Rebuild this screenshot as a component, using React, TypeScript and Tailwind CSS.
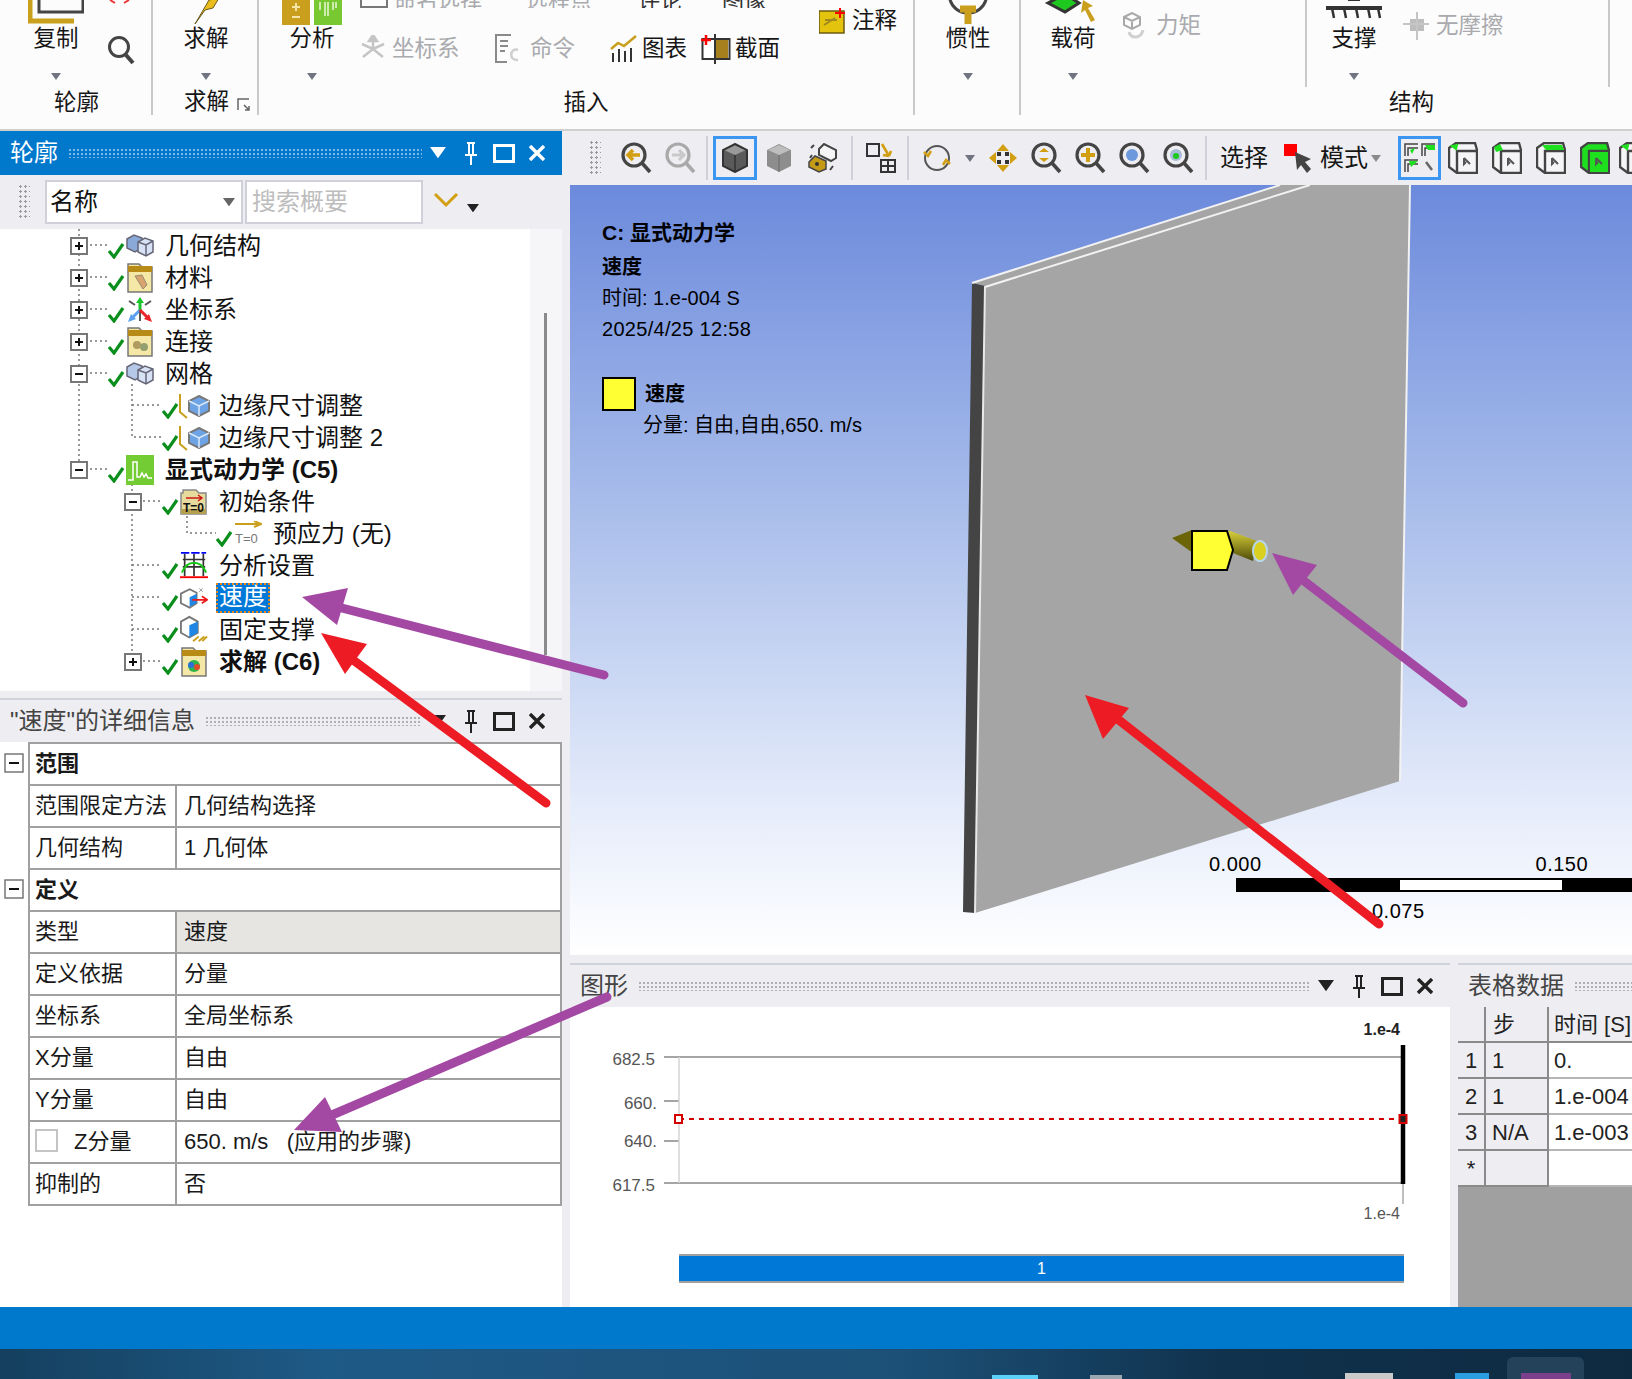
import type { ReactNode } from "react"

const Caret = ({ color = "#6f7480", size = 10 }: { color?: string; size?: number }) => (
  <svg width={size} height={size * 0.7} viewBox="0 0 10 7" className="shrink-0">
    <path d="M0 0H10L5 7Z" fill={color} />
  </svg>
)

const Sep = () => <div className="w-[2px] h-[44px] bg-[#d0d1d8] shrink-0" />

const Grip = ({ className }: { className: string }) => (
  <div className={`bg-[radial-gradient(circle,#9a9a9a_1px,transparent_1.2px)] bg-[length:5px_5px] ${className}`} />
)

const WinButtons = ({ color }: { color: string }) => (
  <div className="flex items-center shrink-0 pr-[7px]">
    <Caret color={color} size={16} />
    <svg width="14" height="24" viewBox="0 0 14 24" className="ml-[18px]" fill="none" stroke={color} strokeWidth="2">
      <path d="M3 2H11M5 2V14M9 2V14M1 14H13M7 14V24" />
    </svg>
    <svg width="22" height="20" viewBox="0 0 22 20" className="ml-[15px]" fill="none" stroke={color}>
      <rect x="1.5" y="2.5" width="19" height="16" strokeWidth="3" />
    </svg>
    <svg width="16" height="16" viewBox="0 0 16 16" className="ml-[14px]" stroke={color} strokeWidth="3.4">
      <path d="M1 1L15 15M15 1L1 15" />
    </svg>
  </div>
)

const PanelHeader = ({ title, active, grip }: { title: string; active?: boolean; grip?: boolean }) => (
  <div
    className={`flex items-center h-[44px] shrink-0 pl-[10px] pr-[10px] text-[24px] leading-none ${
      active ? "bg-[#0078cc] text-white" : "bg-[#eeeef2] text-[#444] border-t-2 border-[#d0d2dc]"
    }`}
  >
    <span className="shrink-0">{title}</span>
    <div
      className={`flex-1 h-[10px] ml-[10px] bg-[length:4px_4px] ${grip ? "-mr-[10px]" : "mr-[8px]"} ${
        active
          ? "bg-[radial-gradient(circle,#7db8e6_1px,transparent_1.2px)]"
          : "bg-[radial-gradient(circle,#b0b0b0_1px,transparent_1.2px)]"
      }`}
    />
    {!grip && <WinButtons color={active ? "#ffffff" : "#222222"} />}
  </div>
)

/* ---------- ribbon ---------- */

const BigButton = ({ label, icon, w = "w-[56px]" }: { label: string; icon: ReactNode; w?: string }) => (
  <div className={`flex flex-col items-center shrink-0 ${w}`}>
    <div className="h-[25px] flex items-start justify-center">{icon}</div>
    <div className="h-[24px] mt-[2px] leading-[24px] whitespace-nowrap">{label}</div>
    <div className="mt-[22px] h-[8px]">
      <Caret />
    </div>
  </div>
)

const Small = ({ icon, label, off, className = "" }: { icon: ReactNode; label: string; off?: boolean; className?: string }) => (
  <div className={`flex items-center shrink-0 h-[32px] whitespace-nowrap ${off ? "text-[#a9aaae]" : "text-[#161616]"} ${className}`}>
    {icon}
    <span>{label}</span>
  </div>
)

const GroupLabel = ({ children, className = "" }: { children: ReactNode; className?: string }) => (
  <div className={`h-[26px] leading-[28px] ${className}`}>{children}</div>
)

const Ribbon = () => (
  <div className="flex h-[129px] shrink-0 bg-[#fcfcfc] border-b-0 text-[22.5px] text-[#161616] overflow-hidden">
    {/* 轮廓 */}
    <div className="w-[151px] h-[115px] shrink-0 flex flex-col justify-between">
      <div className="flex pl-[28px]">
        <BigButton
          label="复制"
          icon={
            <svg width="56" height="24" viewBox="0 0 56 24" fill="none">
              <rect x="11" y="-6" width="44" height="18" stroke="#444" strokeWidth="3" />
              <path d="M2 0V21H46" stroke="#c9a01c" strokeWidth="5" />
            </svg>
          }
        />
        <div className="ml-[23px]">
          <svg width="30" height="66" viewBox="0 0 30 66" fill="none">
            <path d="M3 0L8 3M17 3L22 0" stroke="#e33" strokeWidth="2" />
            <circle cx="12" cy="47" r="9.5" stroke="#444" strokeWidth="3" />
            <path d="M19 55L26 63" stroke="#444" strokeWidth="4" />
          </svg>
        </div>
      </div>
      <GroupLabel className="text-center pl-[2px]">轮廓</GroupLabel>
    </div>
    <div className="w-[2px] h-[115px] bg-[#c9c9c9] shrink-0" />
    {/* 求解 */}
    <div className="w-[104px] h-[115px] shrink-0 flex flex-col justify-between">
      <div className="pl-[25px]">
        <BigButton
          label="求解"
          icon={
            <svg width="34" height="24" viewBox="0 0 34 24">
              <path d="M30 -2L20 0L6 24L16 10L24 8Z" fill="#e8bd1c" stroke="#6a5a20" strokeWidth="1" />
            </svg>
          }
        />
      </div>
      <GroupLabel className="pl-[31px] flex items-center">
        求解
        <svg width="13" height="13" viewBox="0 0 13 13" className="ml-[8px] mt-[4px]" fill="none" stroke="#666" strokeWidth="1.5">
          <path d="M1 12V1H12M7 7L12 12M12 8V12H8" />
        </svg>
      </GroupLabel>
    </div>
    <div className="w-[2px] h-[115px] bg-[#c9c9c9] shrink-0" />
    {/* 插入 */}
    <div className="w-[654px] h-[115px] shrink-0 flex flex-col justify-between">
      <div className="flex pl-[23px]">
        <BigButton
          w="w-[60px]"
          label="分析"
          icon={
            <svg width="60" height="25" viewBox="0 0 60 25">
              <rect x="0" y="-2" width="28" height="27" fill="#c99f1d" />
              <path d="M14 3V11M10 7H18M10 17H18" stroke="#f5e6a8" strokeWidth="2" />
              <rect x="32" y="-2" width="28" height="27" fill="#78c832" />
              <path d="M38 2V10M43 2V16M46 2V16M51 2V10M54 2V8" stroke="#eaf8d8" strokeWidth="1.5" />
            </svg>
          }
        />
        <div className="flex flex-col ml-[18px] w-[470px] shrink-0">
          <div className="flex h-[8px] overflow-hidden items-end text-[#a9aaae]">
            <div className="flex items-end -mb-[4px] text-[22px]">
              <svg width="28" height="8" viewBox="0 0 28 8" fill="none" stroke="#777" strokeWidth="2" className="mb-[4px] mr-[6px]">
                <path d="M1 0V7H27V0" />
              </svg>
              <span className="leading-[22px]">命名选择</span>
              <span className="leading-[22px] ml-[44px]">远程点</span>
              <span className="leading-[22px] ml-[46px] text-[#333]">评论</span>
              <span className="leading-[22px] ml-[40px] text-[#333]">图像</span>
            </div>
          </div>
          <div className="flex mt-[25px]">
            <Small
              off
              label="坐标系"
              className="w-[135px]"
              icon={
                <svg width="26" height="28" viewBox="0 0 26 28" className="mr-[6px]" stroke="#c5c5c5" strokeWidth="2.5" fill="#c5c5c5">
                  <path d="M13 14V2M13 14L3 22M13 14L23 22M13 14L2 9M13 14L24 9" />
                  <path d="M13 0L9 6H17Z" />
                </svg>
              }
            />
            <Small
              off
              label="命令"
              className="w-[115px]"
              icon={
                <svg width="24" height="30" viewBox="0 0 24 30" className="mr-[11px]" fill="none" stroke="#8a8a8a" strokeWidth="2">
                  <path d="M16 1H1V28H12M5 7H13M5 12H13M5 17H10" />
                  <path d="M23 16C15 13 13 27 23 26" stroke="#cfcfcf" strokeWidth="2.5" />
                </svg>
              }
            />
            <Small
              label="图表"
              className="w-[91px]"
              icon={
                <svg width="28" height="28" viewBox="0 0 28 28" className="mr-[4px]" fill="none">
                  <path d="M1 14L8 8L14 11L26 1" stroke="#c99f1d" strokeWidth="2.5" />
                  <path d="M3 27V18M9 27V14M15 27V16M21 27V13" stroke="#333" strokeWidth="2" />
                </svg>
              }
            />
            <Small
              label="截面"
              icon={
                <svg width="30" height="30" viewBox="0 0 30 30" className="mr-[4px]">
                  <rect x="1.5" y="5" width="27" height="20" fill="#fff" stroke="#333" strokeWidth="2" />
                  <rect x="14" y="6" width="13" height="18" fill="#a5801c" />
                  <path d="M14 0V30" stroke="#333" strokeWidth="2" />
                  <path d="M5 1V11M0 6H10" stroke="#f00" strokeWidth="2.5" />
                </svg>
              }
            />
          </div>
        </div>
        <Small
          label="注释"
          className="-ml-[11px] mt-[5px] shrink-0"
          icon={
            <svg width="28" height="26" viewBox="0 0 28 26" className="mr-[5px]">
              <rect x="0" y="3" width="25" height="22" fill="#e3c30d" stroke="#6b5a10" strokeWidth="1.5" />
              <path d="M5 17L16 10M6 12H18" stroke="#a08a20" strokeWidth="2" />
              <path d="M21 0V10M16 5H26" stroke="#f00" strokeWidth="2" />
            </svg>
          }
        />
      </div>
      <GroupLabel className="text-center">插入</GroupLabel>
    </div>
    <div className="w-[2px] h-[115px] bg-[#c9c9c9] shrink-0" />
    {/* 惯性 */}
    <div className="w-[104px] h-[115px] shrink-0 pl-[25px]">
      <BigButton
        label="惯性"
        icon={
          <svg width="44" height="24" viewBox="0 0 44 24" fill="none">
            <path d="M3 -6C4 8 14 13 22 13C30 13 40 8 41 -6" stroke="#444" strokeWidth="3" />
            <path d="M22 24V8M14 9H30" stroke="#c99f1d" strokeWidth="7" />
          </svg>
        }
      />
    </div>
    <div className="w-[2px] h-[115px] bg-[#c9c9c9] shrink-0" />
    {/* 结构 */}
    <div className="flex-1 flex flex-col justify-between h-[115px]">
      <div className="flex">
        <div className="w-[284px] h-[87px] shrink-0 flex pl-[20px]">
          <BigButton
            w="w-[64px]"
            label="载荷"
            icon={
              <svg width="60" height="24" viewBox="0 0 60 24">
                <path d="M5 3L22 12L36 3L22 -6Z" fill="#1ec81e" stroke="#333" strokeWidth="3" />
                <path d="M40 0L50 6L45 8L52 20L48 22L42 10L38 13Z" fill="#c99f1d" />
              </svg>
            }
          />
          <Small
            off
            label="力矩"
            className="ml-[16px] mt-[10px]"
            icon={
              <svg width="24" height="28" viewBox="0 0 24 28" className="mr-[11px]" fill="none" stroke="#a9a9a9" strokeWidth="2">
                <path d="M3 5L11 1L19 5V13L11 17L3 13ZM3 5L11 9L19 5M11 9V17" />
                <path d="M8 20C10 27 20 27 22 18" stroke="#d0d0d0" strokeWidth="3" />
              </svg>
            }
          />
        </div>
        <div className="w-[2px] h-[87px] bg-[#c9c9c9] shrink-0" />
        <div className="w-[301px] h-[87px] shrink-0 flex pl-[15px]">
          <BigButton
            w="w-[64px]"
            label="支撑"
            icon={
              <svg width="56" height="24" viewBox="0 0 56 24" fill="none" stroke="#333">
                <path d="M0 8H56" strokeWidth="4" />
                <path d="M6 8L8 18M18 8L20 18M30 8L32 18M42 8L44 18M52 8L54 18" strokeWidth="2.5" />
                <path d="M22 0H34" strokeWidth="2" />
              </svg>
            }
          />
          <Small
            off
            label="无摩擦"
            className="ml-[16px] mt-[10px]"
            icon={
              <svg width="28" height="30" viewBox="0 0 28 30" className="mr-[6px]">
                <rect x="8" y="8" width="14" height="12" fill="#bdbdbd" />
                <path d="M1 13H27M15 1V29" stroke="#c5c5c5" strokeWidth="2" />
              </svg>
            }
          />
        </div>
        <div className="w-[2px] h-[87px] bg-[#c9c9c9] shrink-0" />
      </div>
      <GroupLabel className="pl-[368px]">结构</GroupLabel>
    </div>
  </div>
)

/* ---------- tree ---------- */

const Check = () => (
  <svg width="17" height="17" viewBox="0 0 17 17" className="shrink-0 mt-[8px]" fill="none" stroke="#0a8f1c" strokeWidth="3.2">
    <path d="M1 9L6 15L15 2" />
  </svg>
)

const Expander = ({ minus }: { minus?: boolean }) => (
  <svg width="18" height="18" viewBox="0 0 18 18" className="shrink-0 bg-white" fill="none">
    <rect x="1" y="1" width="16" height="16" stroke="#777" strokeWidth="2" />
    <path d={minus ? "M5 9H13" : "M5 9H13M9 5V13"} stroke="#111" strokeWidth="2" />
  </svg>
)

const Cube = ({ fill = "#6ea4e6", size = 22 }: { fill?: string; size?: number }) => (
  <svg width={size} height={size} viewBox="0 0 22 22" fill="none">
    <path d="M11 1L21 6V16L11 21L1 16V6Z" fill={fill} stroke="#777" strokeWidth="2" />
    <path d="M1 6L11 11L21 6M11 11V21" stroke="#dce9f8" strokeWidth="1.5" />
  </svg>
)

const BoxPair = ({ fill }: { fill: string }) => (
  <svg width="28" height="24" viewBox="0 0 28 24" fill="none">
    <path d="M1 5L8 1L16 4V14L9 18L1 14Z" fill={fill} stroke="#667" strokeWidth="1.5" />
    <path d="M12 8L19 4L27 7V18L20 22L12 18Z" fill="#d7e2f4" stroke="#667" strokeWidth="1.5" />
    <path d="M12 8L20 11L27 7M20 11V22" stroke="#667" strokeWidth="1.5" />
  </svg>
)

const Folder = ({ children }: { children: ReactNode }) => (
  <svg width="26" height="30" viewBox="0 0 26 30">
    <path d="M1 1H12L15 4H25V29H1Z" fill="#f5e7a6" stroke="#777" strokeWidth="1.5" />
    <rect x="1" y="3" width="24" height="6" fill="#b88a16" />
    {children}
  </svg>
)

const icons: Record<string, ReactNode> = {
  geometry: <BoxPair fill="#8aa9d8" />,
  material: (
    <Folder>
      <path d="M8 13L15 12L20 22L16 26Z" fill="#d8a470" stroke="#9a8a70" />
    </Folder>
  ),
  coords: (
    <svg width="26" height="26" viewBox="0 0 26 26" fill="none" strokeWidth="3">
      <path d="M2 4L8 8M24 4L18 8" stroke="#555" strokeWidth="2" />
      <path d="M13 13V4" stroke="#1cc42c" />
      <path d="M13 0L9 6H17Z" fill="#1cc42c" />
      <path d="M13 13L6 20" stroke="#5aa0ee" />
      <path d="M1 25L4 17L9 22Z" fill="#5aa0ee" />
      <path d="M13 13V24" stroke="#555" strokeWidth="2" />
      <path d="M13 13L20 20" stroke="#e8262a" />
      <path d="M25 25L22 17L17 22Z" fill="#e8262a" />
    </svg>
  ),
  connect: (
    <Folder>
      <circle cx="10" cy="18" r="4" fill="#b09a60" />
      <circle cx="17" cy="20" r="4" fill="#94a070" />
    </Folder>
  ),
  mesh: <BoxPair fill="#b5c8e8" />,
  sizing: (
    <div className="flex items-center">
      <svg width="10" height="28" viewBox="0 0 10 28" fill="none" stroke="#c99f1d" strokeWidth="2">
        <path d="M2 2V20L9 26" />
      </svg>
      <Cube />
    </div>
  ),
  explicit: (
    <svg width="28" height="30" viewBox="0 0 28 30">
      <rect width="28" height="30" fill="#74cc34" />
      <path d="M2 25H7V7H11V22H14L16 18L18 22L20 19L22 23H26" fill="none" stroke="#fff" strokeWidth="1.5" />
    </svg>
  ),
  init: (
    <svg width="28" height="30" viewBox="0 0 28 30">
      <path d="M3 3H16L19 6H26V27H1V6H3Z" fill="#e6da9c" stroke="#888" strokeWidth="1.5" />
      <rect x="1" y="22" width="25" height="5" fill="#b5a050" />
      <path d="M6 11H22M18 8L22 11L18 14" stroke="#d01818" strokeWidth="1.5" fill="none" />
      <text x="3" y="25" fontSize="12" fontWeight="700" fill="#111">T=0</text>
    </svg>
  ),
  prestress: (
    <svg width="28" height="26" viewBox="0 0 28 26">
      <path d="M1 3H24M20 0L27 3L20 6" stroke="#c99f1d" strokeWidth="2" fill="none" />
      <text x="1" y="22" fontSize="13" fill="#777">T=0</text>
    </svg>
  ),
  settings: (
    <svg width="30" height="30" viewBox="0 0 30 30" fill="none">
      <path d="M1 1H10M12 1H21M23 1H28" stroke="#00f" strokeWidth="2" />
      <path d="M5 2V26M15 2V26M25 2V26M3 8H27M3 16H27" stroke="#333" strokeWidth="1.8" />
      <path d="M2 22C8 8 22 8 28 22" stroke="#16c816" strokeWidth="2" />
      <path d="M0 27H30" stroke="#f00" strokeWidth="2" />
    </svg>
  ),
  velocity: (
    <svg width="32" height="26" viewBox="0 0 32 26" fill="none">
      <path d="M1 8L11 3L19 7V19L11 24L1 19Z" fill="#fff" stroke="#777" strokeWidth="2" />
      <path d="M11 12L19 8V19L11 23Z" fill="#1f86e5" />
      <path d="M14 15H30M25 11L31 15L25 19" stroke="#ee1a1a" strokeWidth="2" />
      <path d="M22 2L26 6M26 2L22 6" stroke="#888" strokeWidth="1" />
    </svg>
  ),
  fixed: (
    <svg width="30" height="30" viewBox="0 0 30 30" fill="none">
      <path d="M1 6L10 1L19 6V18L10 23L1 18Z" fill="#fff" stroke="#777" strokeWidth="2" />
      <path d="M10 10L19 6V18L10 23Z" fill="#1f86e5" />
      <path d="M14 27L20 22M20 27L26 22M24 27L29 22" stroke="#c99f1d" strokeWidth="2" />
    </svg>
  ),
  solution: (
    <Folder>
      <circle cx="13" cy="19" r="6" fill="#2fb34a" />
      <circle cx="10" cy="18" r="3" fill="#2f6fd8" />
      <circle cx="16" cy="20" r="3" fill="#e24a2a" />
    </Folder>
  ),
}

const pads = ["pl-[70px]", "pl-[124px]", "pl-[178px]"]

type Node = { level: number; exp?: "plus" | "minus"; icon: string; label: string; bold?: boolean; sel?: boolean }

const nodes: Node[] = [
  { level: 0, exp: "plus", icon: "geometry", label: "几何结构" },
  { level: 0, exp: "plus", icon: "material", label: "材料" },
  { level: 0, exp: "plus", icon: "coords", label: "坐标系" },
  { level: 0, exp: "plus", icon: "connect", label: "连接" },
  { level: 0, exp: "minus", icon: "mesh", label: "网格" },
  { level: 1, icon: "sizing", label: "边缘尺寸调整" },
  { level: 1, icon: "sizing", label: "边缘尺寸调整 2" },
  { level: 0, exp: "minus", icon: "explicit", label: "显式动力学 (C5)", bold: true },
  { level: 1, exp: "minus", icon: "init", label: "初始条件" },
  { level: 2, icon: "prestress", label: "预应力 (无)" },
  { level: 1, icon: "settings", label: "分析设置" },
  { level: 1, icon: "velocity", label: "速度", sel: true },
  { level: 1, icon: "fixed", label: "固定支撑" },
  { level: 1, exp: "plus", icon: "solution", label: "求解 (C6)", bold: true },
]

const Tree = () => (
  <div className="relative w-[530px] h-[462px] bg-white shrink-0 text-[24px] text-[#111] pt-px">
    <svg width="530" height="462" className="absolute left-0 top-0" fill="none" stroke="#777" strokeWidth="1.5" strokeDasharray="2 3">
      <path d="M79 0V240M132 155V208H162M132 176H162M132 240V432M187 272V304H216" />
      <path d="M90 16H108M90 48H108M90 80H108M90 112H108M90 144H108M90 240H108M143 272H162M132 336H162M132 368H162M132 400H162M143 432H162" />
    </svg>
    {nodes.map((n) => (
      <div key={n.label} className={`relative flex items-center h-[32px] ${pads[n.level]}`}>
        <div className="w-[18px] h-[18px] shrink-0">{n.exp && <Expander minus={n.exp === "minus"} />}</div>
        <div className="ml-[20px]">
          <Check />
        </div>
        <div className="w-[28px] ml-[1px] mr-[11px] flex justify-center shrink-0">{icons[n.icon]}</div>
        {n.sel ? (
          <span className="-ml-[3px] px-[3px] h-[30px] leading-[28px] bg-[#0078d7] text-white outline-dotted outline-2 -outline-offset-2 outline-[#e8861a]">
            {n.label}
          </span>
        ) : (
          <span className={`whitespace-nowrap leading-none ${n.bold ? "font-bold" : ""}`}>{n.label}</span>
        )}
      </div>
    ))}
  </div>
)

/* ---------- details ---------- */

type Row = { head?: string; k?: string; v?: string; grey?: boolean; check?: boolean }

const rows: Row[] = [
  { head: "范围" },
  { k: "范围限定方法", v: "几何结构选择" },
  { k: "几何结构", v: "1 几何体" },
  { head: "定义" },
  { k: "类型", v: "速度", grey: true },
  { k: "定义依据", v: "分量" },
  { k: "坐标系", v: "全局坐标系" },
  { k: "X分量", v: "自由" },
  { k: "Y分量", v: "自由" },
  { k: "Z分量", v: "650. m/s   (应用的步骤)", check: true },
  { k: "抑制的", v: "否" },
]

const Details = () => (
  <div className="flex-1 bg-white text-[22px] text-[#1a1a1a]">
    <div className="border-t-2 border-[#a0a0a0] ml-[28px]" />
    {rows.map((r) => (
      <div key={r.head ?? r.k} className="flex h-[42px]">
        <div className="w-[28px] shrink-0 flex pl-[4px] pt-[9px]">
          {r.head && (
            <svg width="20" height="20" viewBox="0 0 20 20" fill="none">
              <rect x="1" y="1" width="18" height="18" stroke="#777" strokeWidth="1.5" />
              <path d="M5 10H15" stroke="#111" strokeWidth="2" />
            </svg>
          )}
        </div>
        <div className="flex flex-1 border-x-2 border-b-2 border-[#a0a0a0] leading-[40px]">
          {r.head ? (
            <div className="pl-[5px] font-bold">{r.head}</div>
          ) : (
            <>
              <div className="w-[147px] shrink-0 pl-[5px] border-r-2 border-[#a0a0a0] flex items-center">
                {r.check && <div className="w-[23px] h-[23px] border-2 border-[#c4c4c4] mr-[16px] -mt-[4px]" />}
                {r.k}
              </div>
              <div className={`flex-1 pl-[7px] whitespace-pre ${r.grey ? "bg-[#e6e5e1]" : ""}`}>{r.v}</div>
            </>
          )}
        </div>
      </div>
    ))}
  </div>
)

/* ---------- toolbar ---------- */

const Mag = ({ children, color = "#444" }: { children?: ReactNode; color?: string }) => (
  <svg width="32" height="32" viewBox="0 0 32 32" fill="none">
    <circle cx="13" cy="13" r="11" stroke={color} strokeWidth="3.2" />
    <path d="M21 21L29 30" stroke={color} strokeWidth="3.6" />
    {children}
  </svg>
)

const Slot = ({ children, sel, w = "w-[44px]" }: { children: ReactNode; sel?: boolean; w?: string }) => (
  <div className={`flex items-center justify-center shrink-0 ${w} ${sel ? "h-[44px] border-[3px] border-[#3a96f0]" : ""}`}>{children}</div>
)

const ViewBox = ({ n }: { n: number }) => (
  <svg width="30" height="32" viewBox="0 0 30 32" fill="none">
    <path d="M1 6L8 1H27L29 8V31H9L1 25Z" fill={n === 3 ? "#1ee01e" : "#f5f5f8"} stroke="#444" strokeWidth="2.4" />
    <path d="M9 31V9H29" stroke="#444" strokeWidth="2.4" />
    {n === 3 && <rect x="10" y="10" width="18" height="20" fill="#1ee01e" />}
    {n === 0 && <path d="M4 4L9 3L8 7Z" fill="#1ee01e" stroke="#1ee01e" strokeWidth="2" />}
    {n === 1 && <path d="M2 5L8 2L11 8L4 10Z" fill="#1ee01e" />}
    {n === 2 && <path d="M6 3H26L28 8H10Z" fill="#1ee01e" />}
    <path d="M16 16L22 22M16 16V22L18 20" stroke="#555" strokeWidth="2" />
  </svg>
)

const SolidCube = ({ light }: { light?: boolean }) => (
  <svg width="26" height="30" viewBox="0 0 26 30">
    <path d="M13 1L25 7V23L13 29L1 23V7Z" fill={light ? "#8d8d8d" : "#5a5a5a"} />
    <path d="M13 2L24 7L13 12L2 7Z" fill={light ? "#bdbdbd" : "#9a9a9a"} />
    <path d="M13 12V29" stroke={light ? "#777" : "#333"} strokeWidth="1.5" />
    {!light && <path d="M13 1L25 7V23L13 29L1 23V7Z" fill="none" stroke="#333" strokeWidth="2" />}
  </svg>
)

const Toolbar = () => (
  <div className="flex items-center h-[54px] shrink-0 overflow-hidden bg-[#eeeef2] text-[24px] text-[#161616] -ml-[8px]">
    <Grip className="w-[12px] h-[36px] ml-[27px] mr-[14px] shrink-0" />
    <Slot>
      <Mag>
        <path d="M19 13H8M12 8L7 13L12 18" stroke="#d39f12" strokeWidth="3.6" />
      </Mag>
    </Slot>
    <Slot>
      <Mag color="#a9a9a9">
        <path d="M7 13H18M14 8L19 13L14 18" stroke="#c9c9c9" strokeWidth="3" />
      </Mag>
    </Slot>
    <div className="ml-[3px] mr-[5px]">
      <Sep />
    </div>
    <Slot sel w="w-[44px]">
      <SolidCube />
    </Slot>
    <Slot>
      <SolidCube light />
    </Slot>
    <Slot>
      <svg width="30" height="30" viewBox="0 0 30 30" fill="none">
        <path d="M3 5L6 2M25 23L22 27M4 12L2 15M26 15L28 13" stroke="#444" strokeWidth="2" />
        <path d="M11 6L16 1L28 7V15L23 18L11 12Z" fill="#f5f5f8" stroke="#444" strokeWidth="2" />
        <path d="M1 19L7 13L18 18V26L11 29L1 24Z" fill="#c59a17" stroke="#444" strokeWidth="1.5" />
        <circle cx="9" cy="21" r="2" fill="#333" />
      </svg>
    </Slot>
    <div className="ml-[6px] mr-[6px]">
      <Sep />
    </div>
    <Slot>
      <svg width="30" height="30" viewBox="0 0 30 30" fill="none">
        <rect x="1" y="1" width="12" height="12" stroke="#333" strokeWidth="2" />
        <rect x="15" y="17" width="14" height="12" stroke="#333" strokeWidth="2" />
        <path d="M22 17V29M15 23H29" stroke="#333" strokeWidth="2" />
        <path d="M16 1L23 13M23 13L17 12M23 13L25 8" stroke="#d39f12" strokeWidth="2.6" />
      </svg>
    </Slot>
    <div className="ml-[4px] mr-[6px]">
      <Sep />
    </div>
    <Slot>
      <svg width="28" height="28" viewBox="0 0 28 28" fill="none">
        <circle cx="14" cy="14" r="12" stroke="#555" strokeWidth="2" />
        <path d="M1 8L5 12L8 7M27 20L23 16L20 21" stroke="#d39f12" strokeWidth="2.5" />
      </svg>
    </Slot>
    <div className="ml-[6px] mr-[6px]">
      <Caret />
    </div>
    <Slot>
      <svg width="28" height="28" viewBox="0 0 28 28">
        <path d="M14 0L20 7H8ZM14 28L20 21H8ZM0 14L7 8V20ZM28 14L21 8V20Z" fill="#d39f12" />
        <rect x="8" y="8" width="4" height="4" fill="#333" />
        <rect x="16" y="8" width="4" height="4" fill="#333" />
        <rect x="8" y="16" width="4" height="4" fill="#333" />
        <rect x="16" y="16" width="4" height="4" fill="#333" />
      </svg>
    </Slot>
    <Slot>
      <Mag>
        <path d="M8 10L13 6L18 10ZM8 16L13 20L18 16Z" fill="#d39f12" />
      </Mag>
    </Slot>
    <Slot>
      <Mag>
        <path d="M13 6V20M6 13H20" stroke="#d39f12" strokeWidth="4" />
      </Mag>
    </Slot>
    <Slot>
      <Mag>
        <circle cx="13" cy="13" r="6" fill="#6c98dc" />
      </Mag>
    </Slot>
    <Slot>
      <Mag>
        <circle cx="13" cy="13" r="6" fill="#a8bcd8" />
        <circle cx="13" cy="14" r="3" fill="#1ec81e" />
      </Mag>
    </Slot>
    <div className="ml-[4px] mr-[13px]">
      <Sep />
    </div>
    <span className="shrink-0 w-[48px] whitespace-nowrap">选择</span>
    <div className="ml-[16px] mr-[8px] shrink-0">
      <svg width="28" height="32" viewBox="0 0 28 32">
        <rect x="0" y="2" width="13" height="12" fill="#f00" />
        <path d="M11 10L27 17L21 20L27 27L23 31L17 23L13 28Z" fill="#444" />
      </svg>
    </div>
    <span className="shrink-0 w-[48px] whitespace-nowrap">模式</span>
    <div className="ml-[3px] mr-[17px]">
      <Caret color="#8a8a8a" />
    </div>
    <Slot sel w="w-[43px]">
      <svg width="32" height="32" viewBox="0 0 32 32" fill="none">
        <path d="M1 14V2H14M4 14V6H14M18 14V2H31M21 14V6H31M1 30V18H14M4 30V22H14" stroke="#444" strokeWidth="1.5" />
        <path d="M6 8L11 6L8 12ZM21 3H31V8H24Z" fill="#1ee01e" />
        <path d="M5 19H14L7 25Z" fill="#1ee01e" />
        <path d="M22 20L28 28" stroke="#666" strokeWidth="2.5" />
      </svg>
    </Slot>
    <Slot>
      <ViewBox n={0} />
    </Slot>
    <Slot>
      <ViewBox n={1} />
    </Slot>
    <Slot>
      <ViewBox n={2} />
    </Slot>
    <Slot>
      <ViewBox n={3} />
    </Slot>
    <div className="shrink-0 ml-[2px]">
      <ViewBox n={0} />
    </div>
  </div>
)

/* ---------- viewport ---------- */

const Viewport = () => (
  <div className="relative h-[770px] shrink-0 overflow-hidden bg-[linear-gradient(180deg,#6c8adc_0%,#a6bbea_40%,#e4ebfa_80%,#ffffff_100%)] text-black">
    <svg width="1062" height="770" className="absolute left-0 top-0">
      <defs>
        <linearGradient id="shaft" x1="0" y1="0" x2="0" y2="1">
          <stop offset="0" stopColor="#d6cf3a" />
          <stop offset="1" stopColor="#4f4a08" />
        </linearGradient>
      </defs>
      {/* 平板 */}
      <path d="M402 98L710 0H840L830 596L405 728L415 101Z" fill="#a5a5a5" />
      <path d="M402 98L415 101L405 728L393 727Z" fill="#444444" />
      <path d="M402 98L710 0M415 102L740 0M840 0L830 596" stroke="#f2f2f2" strokeWidth="2" fill="none" />
      <path d="M415 101L405 728" stroke="#e8e8e8" strokeWidth="2" fill="none" />
      {/* 箭头 */}
      <path d="M602 353L622 345L626 368L620 366Z" fill="#6b6508" />
      <path d="M655 346L660 346L687 356L683 376L663 368L655 366Z" fill="url(#shaft)" />
      <ellipse cx="690" cy="366" rx="7" ry="10" fill="#d9d020" stroke="#b9d6e8" strokeWidth="2" />
      <path d="M622 346H657L663 365L657 385H622Z" fill="#ffff33" stroke="#000" strokeWidth="2" />
    </svg>
    <div className="relative pl-[32px] pt-[35px] text-[21px]">
      <div className="h-[31px] leading-[26px] font-bold">C: 显式动力学</div>
      <div className="h-[31px] leading-[32px] font-bold text-[20px]">速度</div>
      <div className="h-[31px] leading-[32px] text-[20px]">时间: 1.e-004 S</div>
      <div className="h-[31px] leading-[32px] tracking-[0.3px] text-[20px]">2025/4/25 12:58</div>
      <div className="flex mt-[33px]">
        <div className="w-[34px] h-[34px] bg-[#ffff33] border-2 border-black shrink-0" />
        <div className="ml-[9px] text-[20px]">
          <div className="h-[32px] leading-[34px] font-bold">速度</div>
          <div className="h-[32px] leading-[32px] -ml-[2px] whitespace-nowrap">分量: 自由,自由,650. m/s</div>
        </div>
      </div>
    </div>
    {/* 比例尺 */}
    <div className="absolute left-[666px] top-[667px] w-[396px]">
      <div className="flex h-[24px] text-[20px] leading-[24px] tracking-[0.5px]">
        <span className="-ml-[27px]">0.000</span>
        <span className="ml-[274px]">0.150</span>
      </div>
      <div className="flex h-[14px] border-y-2 border-black mt-[2px]">
        <div className="w-[164px] bg-black" />
        <div className="w-[162px] bg-white" />
        <div className="flex-1 bg-black" />
      </div>
      <div className="ml-[136px] mt-[7px] h-[24px] leading-[24px] text-[20px] tracking-[0.5px]">0.075</div>
    </div>
  </div>
)

/* ---------- lower panels ---------- */

const Chart = () => (
  <svg width="880" height="240" className="block" fontFamily="Liberation Sans" fontSize="17" fill="#555">
    <path d="M94 50H833M94 176H833M94 94H109M94 134H109" stroke="#a5a5a5" strokeWidth="2" fill="none" />
    <path d="M109 50V176" stroke="#d5d5d5" strokeWidth="1.5" fill="none" />
    <path d="M109 112H833" stroke="#d40000" strokeWidth="2" strokeDasharray="5 5" fill="none" />
    <path d="M833 38V177" stroke="#000" strokeWidth="4.5" fill="none" />
    <path d="M833 177V197" stroke="#aaa" strokeWidth="1.5" fill="none" />
    <rect x="105" y="108" width="7" height="8" fill="#fff" stroke="#d40000" strokeWidth="2" />
    <rect x="829.5" y="108" width="7" height="8" fill="#222" stroke="#d40000" strokeWidth="2" />
    <text x="830" y="28" textAnchor="end" fill="#222" fontSize="16" fontWeight="700">1.e-4</text>
    <text x="830" y="212" textAnchor="end" fill="#555" fontSize="16">1.e-4</text>
    <text x="85" y="58" textAnchor="end">682.5</text>
    <text x="87" y="102" textAnchor="end">660.</text>
    <text x="87" y="140" textAnchor="end">640.</text>
    <text x="85" y="184" textAnchor="end">617.5</text>
  </svg>
)

const tableRows = [
  ["1", "1", "0."],
  ["2", "1", "1.e-004"],
  ["3", "N/A", "1.e-003"],
  ["*", "", ""],
]

const TabularData = () => (
  <div className="flex-1 flex flex-col min-w-0 overflow-hidden">
    <PanelHeader title="表格数据" grip />
    <div className="flex h-[36px] shrink-0 bg-[#eeeef2] border-b-2 border-[#8a8a8a] leading-[36px] text-[22px] text-[#222]">
      <div className="w-[28px] shrink-0 border-r-2 border-[#8a8a8a]" />
      <div className="w-[63px] shrink-0 border-r-2 border-[#8a8a8a] pl-[7px]">步</div>
      <div className="pl-[5px] whitespace-nowrap">时间 [S]</div>
    </div>
    {tableRows.map((r) => (
      <div key={r[0]} className="flex h-[36px] shrink-0 leading-[36px] text-[22px] text-[#222] border-b-2 border-[#b5b5b5]">
        <div className="w-[28px] shrink-0 bg-[#eeeef2] border-r-2 border-b-2 border-[#8a8a8a] text-center -mb-[2px]">{r[0]}</div>
        <div className="w-[63px] shrink-0 bg-[#eeeef2] border-r-2 border-b-2 border-[#8a8a8a] pl-[6px] -mb-[2px]">{r[1]}</div>
        <div className="pl-[5px] bg-white flex-1 whitespace-nowrap">{r[2]}</div>
      </div>
    ))}
    <div className="flex-1 bg-[#a0a0a0]" />
  </div>
)

const Arrows = () => (
  <svg width="1632" height="1379" className="absolute left-0 top-0 pointer-events-none">
    <g fill="none" strokeWidth="9" strokeLinecap="round">
      <path d="M604 675L330 605" stroke="#a349a4" />
      <path d="M546 803L345 654" stroke="#ed1c24" />
      <path d="M1463 703L1295 574" stroke="#a349a4" />
      <path d="M1379 924L1115 717" stroke="#ed1c24" />
      <path d="M607 997L325 1118" stroke="#a349a4" />
    </g>
    <path d="M302 597L348 588L337 625Z" fill="#a349a4" />
    <path d="M321 633L367 644L345 674Z" fill="#ed1c24" />
    <path d="M1272 553L1317 565L1293 595Z" fill="#a349a4" />
    <path d="M1085 695L1129 708L1103 739Z" fill="#ed1c24" />
    <path d="M294 1130L325 1097L342 1132Z" fill="#a349a4" />
  </svg>
)

const Taskbar = () => (
  <div className="flex items-end h-[30px] shrink-0 overflow-hidden bg-[linear-gradient(90deg,#15405f_0%,#1e5a86_20%,#1c5077_55%,#10324d_75%,#0e2a40_100%)]">
    <div className="ml-[992px] w-[46px] h-[4px] bg-[#5cd0f8] shrink-0" />
    <div className="ml-[52px] w-[32px] h-[4px] bg-[#9aa7b0] shrink-0" />
    <div className="ml-[223px] w-[48px] h-[6px] bg-[#c9c9c9] shrink-0" />
    <div className="ml-[62px] w-[34px] h-[6px] bg-[#2a9ee0] shrink-0" />
    <div className="ml-[18px] w-[77px] h-[22px] bg-[#24425a] rounded-t-[6px] shrink-0 flex items-end justify-center">
      <div className="w-[50px] h-[6px] bg-[#7c3f8c]" />
    </div>
  </div>
)

const App = () => {
  return (
    <div className="relative w-[1632px] h-[1379px] overflow-hidden flex flex-col bg-[#eeeef2] font-['Liberation_Sans','Noto_Sans_CJK_SC',sans-serif]">
      <Ribbon />
      <div className="h-[2px] bg-[#cfcfcf] shrink-0" />
      <div className="flex flex-1 min-h-0">
        <div className="w-[562px] shrink-0 flex flex-col">
          <PanelHeader title="轮廓" active />
          <div className="flex items-center h-[54px] shrink-0 text-[24px]">
            <Grip className="w-[12px] h-[36px] ml-[18px] mr-[15px] shrink-0" />
            <div className="flex items-center justify-between w-[198px] h-[44px] px-[3px] bg-white border-2 border-[#cfd0da] text-[#111] shrink-0">
              名称
              <div className="mr-[3px]">
                <Caret color="#666" size={12} />
              </div>
            </div>
            <div className="flex items-center w-[178px] h-[44px] ml-[2px] px-[5px] bg-white border-2 border-[#cfd0da] text-[#bdbdbd] shrink-0">
              搜索概要
            </div>
            <svg width="26" height="16" viewBox="0 0 26 16" className="ml-[10px] mb-[4px] shrink-0" fill="none" stroke="#d39f12" strokeWidth="3">
              <path d="M2 2L13 13L24 2" />
            </svg>
            <div className="ml-[8px] mt-[12px]">
              <Caret color="#222" size={12} />
            </div>
          </div>
          <div className="flex h-[462px] shrink-0">
            <Tree />
            <div className="flex-1 bg-[#f6f6f8] pl-[14px] pt-[84px]">
              <div className="w-[3px] h-[342px] bg-[#8a8a8a]" />
            </div>
          </div>
          <div className="h-[7px] shrink-0" />
          <PanelHeader title={'"速度"的详细信息'} />
          <Details />
        </div>
        <div className="flex-1 ml-[8px] flex flex-col min-w-0">
          <Toolbar />
          <Viewport />
          <div className="h-[8px] shrink-0 bg-[#eeeef2]" />
          <div className="flex flex-1 min-h-0">
            <div className="w-[880px] shrink-0 flex flex-col">
              <PanelHeader title="图形" />
              <div className="flex-1 bg-white">
                <Chart />
                <div className="ml-[109px] mt-[7px] w-[725px] h-[29px] bg-[#0078d7] border-y-2 border-[#a0a0a0] text-white text-[16px] leading-[25px] text-center">
                  1
                </div>
              </div>
            </div>
            <div className="w-[8px] shrink-0" />
            <TabularData />
          </div>
        </div>
      </div>
      <div className="h-[42px] bg-[#0078cc] shrink-0" />
      <Taskbar />
      <Arrows />
    </div>
  )
}

export default App
